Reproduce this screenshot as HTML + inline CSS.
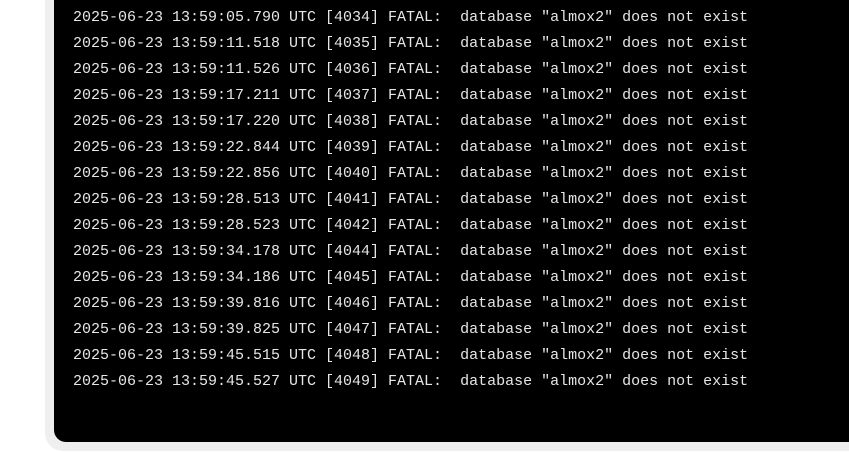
<!DOCTYPE html>
<html><head><meta charset="utf-8"><style>
html,body{margin:0;padding:0;background:#fff;width:849px;height:452px;overflow:hidden}
.frame{position:absolute;left:45px;top:-30px;width:900px;height:481px;background:#efefef;border-radius:18px}
.term{position:absolute;left:54px;top:-30px;width:900px;height:472px;background:#000;border-radius:12px}
pre{position:absolute;left:73px;top:5px;margin:0;font-family:"Liberation Mono","Courier New",monospace;font-size:15px;line-height:26px;color:#e6e6e6;white-space:pre}
</style></head><body>
<div class="frame"></div><div class="term"></div>
<pre>2025-06-23 13:59:05.790 UTC [4034] FATAL:  database "almox2" does not exist
2025-06-23 13:59:11.518 UTC [4035] FATAL:  database "almox2" does not exist
2025-06-23 13:59:11.526 UTC [4036] FATAL:  database "almox2" does not exist
2025-06-23 13:59:17.211 UTC [4037] FATAL:  database "almox2" does not exist
2025-06-23 13:59:17.220 UTC [4038] FATAL:  database "almox2" does not exist
2025-06-23 13:59:22.844 UTC [4039] FATAL:  database "almox2" does not exist
2025-06-23 13:59:22.856 UTC [4040] FATAL:  database "almox2" does not exist
2025-06-23 13:59:28.513 UTC [4041] FATAL:  database "almox2" does not exist
2025-06-23 13:59:28.523 UTC [4042] FATAL:  database "almox2" does not exist
2025-06-23 13:59:34.178 UTC [4044] FATAL:  database "almox2" does not exist
2025-06-23 13:59:34.186 UTC [4045] FATAL:  database "almox2" does not exist
2025-06-23 13:59:39.816 UTC [4046] FATAL:  database "almox2" does not exist
2025-06-23 13:59:39.825 UTC [4047] FATAL:  database "almox2" does not exist
2025-06-23 13:59:45.515 UTC [4048] FATAL:  database "almox2" does not exist
2025-06-23 13:59:45.527 UTC [4049] FATAL:  database "almox2" does not exist</pre>
</body></html>
